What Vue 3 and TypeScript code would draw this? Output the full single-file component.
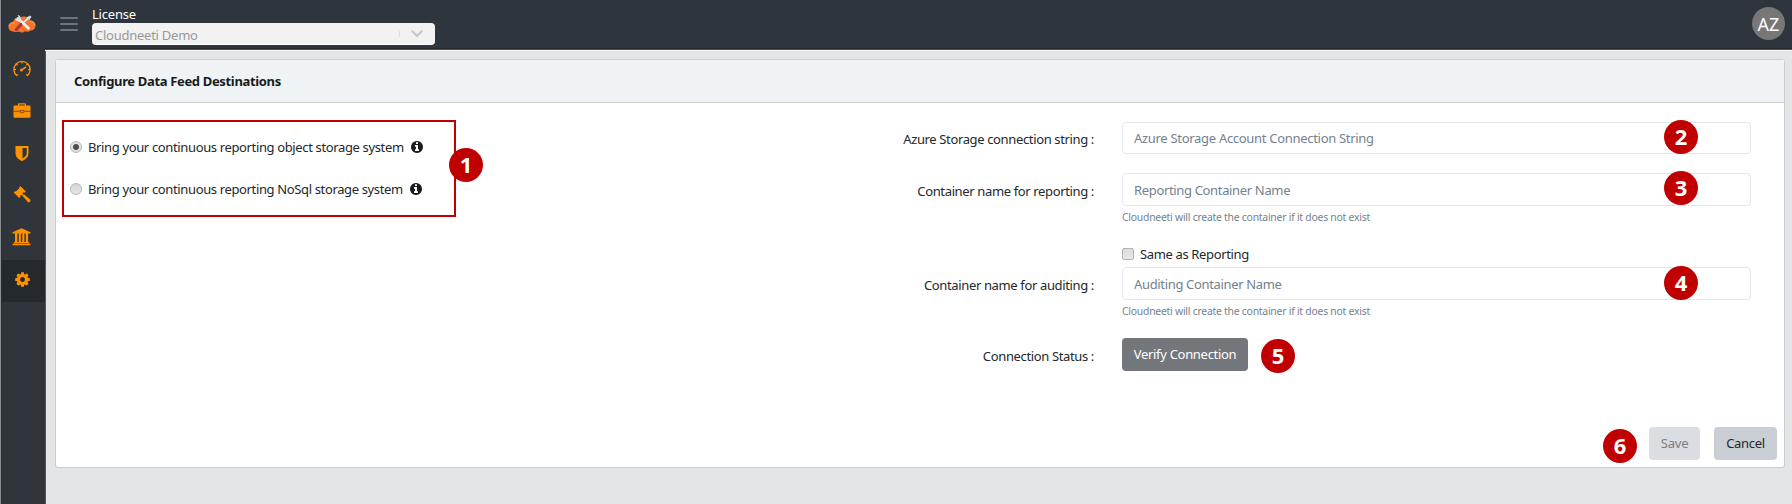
<script setup lang="ts">
import { ref } from 'vue'

type IconName = 'gauge' | 'briefcase' | 'shield' | 'gavel' | 'bank' | 'cog'

const navItems: { icon: IconName; label: string }[] = [
  { icon: 'gauge', label: 'Dashboard' },
  { icon: 'briefcase', label: 'Assets' },
  { icon: 'shield', label: 'Security' },
  { icon: 'gavel', label: 'Policies' },
  { icon: 'bank', label: 'Governance' },
  { icon: 'cog', label: 'Configuration' },
]
const activeIcon: IconName = 'cog'

const storage = ref('object')
const options = [
  { value: 'object', text: 'Bring your continuous reporting object storage system' },
  { value: 'nosql', text: 'Bring your continuous reporting NoSql storage system' },
]
const connection = ref('')
const reporting = ref('')
const auditing = ref('')
</script>

<template>
  <div class="app">
    <aside class="sidebar">
      <div class="logo">
        <svg width="28" height="20" viewBox="0 0 28 20">
          <path d="M5 17.500C2 17.500.5 15.500.5 13.300 0 10.500 2.300 8 5 8c.4-3 3.500-4.500 6-3.500 3-3 9.500-2.500 11 2C26 6.500 28 9.500 27.500 12c-.3 3-2.500 4.500-5 4.500-1.500 1.500-4 1.500-5.500.8-1.500 1.500-4.500 1.800-6 .2-1.500.8-4 .8-6 0z" fill="#f5742a" />
          <path d="M1 12c.8-2.800 3.500-4 6-2.500M22 7c2.500-.2 4.500 2 4.700 4" stroke="#ffa564" stroke-width="1" fill="none" />
          <path d="M10 4.500l10.500 9.700" stroke="#edf0f4" stroke-width="2.900" stroke-linecap="round" />
          <path d="M7 3.200c-.3 2.800 1.700 4.600 4.200 4.100 2-1.300 2.300-4.500-.2-6L9.700 1l1 2.400-1.300 1.400-2.400-.6z" fill="#d8e0e8" />
          <path d="M20.500 3.800l-7.500 7" stroke="#f1f3f5" stroke-width="1.800" />
          <path d="M18.600 3.400l3.400-2 1.500 1.500-2.300 3.200z" fill="#d5dce4" />
          <path d="M12.900 10.400l-4.700 5.300" stroke="#b92f2c" stroke-width="3" stroke-linecap="round" />
        </svg>
      </div>
      <nav>
        <a v-for="item in navItems" :key="item.icon" class="nav-item" :class="{ active: item.icon === activeIcon }" :aria-label="item.label">
          <svg v-if="item.icon === 'gauge'" width="20" height="20" viewBox="0 0 20 20">
            <path d="M5 16.900A8.100 8.100 0 1 1 15 16.900" fill="none" stroke="#ff9100" stroke-width="1.300" />
            <path d="M2 10.500h2M4.300 5l1.300 1.200M10 2.500v2M15.700 5l-1.300 1.200M18 10.500h-2M4.700 16.500l1.200-1.500M15.300 16.500L14.100 15" stroke="#ff9100" stroke-width="1.200" />
            <path d="M9.500 11.200L14 8" stroke="#ff9100" stroke-width="1.600" />
            <circle cx="9.400" cy="11" r="1.500" fill="#ff9100" />
          </svg>
          <svg v-else-if="item.icon === 'briefcase'" width="20" height="20" viewBox="0 0 20 20">
            <path fill="#ff9100" fill-rule="evenodd" d="M6 4.500V3.300Q6 2.300 7 2.300h6q1 0 1 1v1.200h3.500q1 0 1 1v10.300q0 .9-1 .9h-15q-1 0-1-.9V5.500q0-1 1-1zm1.300 0h5.400V3.500H7.300z" />
            <path d="M1.500 10.300h6.300M12.200 10.300h6.300" stroke="#7a4b16" stroke-width="1" />
            <path d="M8 9.600h4v1.700q-2 1.500-4 0z" fill="#ff9100" stroke="#7a4b16" stroke-width=".9" />
          </svg>
          <svg v-else-if="item.icon === 'shield'" width="18" height="20" viewBox="0 0 18 20">
            <path fill="#ff9100" fill-rule="evenodd" d="M2.500 3h13v7.200q0 4.800-6.500 8-6.500-3.200-6.500-8zM9.500 5v10.500q4.200-2.400 4.200-5.400V5z" />
          </svg>
          <svg v-else-if="item.icon === 'gavel'" width="20" height="20" viewBox="0 0 20 20">
            <g fill="#ff9100">
              <path d="M8.700 1.600l4.800 4.800-.9 1-.7-.4-3.600 3.600.4.700-1 .9-5.600-4.900.9-1 .8.300 3.700-3.700-.4-.6z" />
              <path d="M9.600 7.700l2 1.600-1.100 1.500-2-1.500z" />
              <path d="M12 9.300l6.100 5.200q.9 1-.1 2.200-1.200 1.200-2.200.2L10.600 11z" />
              <path d="M2.600 6.700L8.200 12l-.9.900L1.700 7.600zM8.200 1.200l5.700 5.500-.9 1-5.600-5.700z" />
            </g>
          </svg>
          <svg v-else-if="item.icon === 'bank'" width="20" height="20" viewBox="0 0 20 20">
            <g fill="#ff9100">
              <path d="M9.500 1.200l9 4v1.200H.5V5.200z" />
              <path d="M3 6h2.300v9H3zM6.800 6h2.100v9H6.800zM10.300 6h2.100v9h-2.100zM13.800 6h2.300v9h-2.300z" />
              <path d="M1.800 14.900h15.400v1.300H1.800zM.5 16.700h18v1.600H.5z" />
            </g>
          </svg>
          <svg v-else width="17" height="17" viewBox="0 0 1792 1792">
            <path fill="#ff9100" d="M1152 896q0-106-75-181t-181-75-181 75-75 181 75 181 181 75 181-75 75-181zm512-109v222q0 12-8 23t-20 13l-185 28q-19 54-39 91 35 50 107 138 10 12 10 25t-9 23q-27 37-99 108t-94 71q-12 0-26-9l-138-108q-44 23-91 38-16 136-29 186-7 28-36 28h-222q-14 0-24.500-8.500t-11.500-21.500l-28-184q-49-16-90-37l-141 107q-10 9-25 9-14 0-25-11-126-114-165-168-7-10-7-23 0-12 8-23 15-21 51-66.500t54-70.500q-27-50-41-99l-183-27q-13-2-21-12.500t-8-23.500v-222q0-12 8-23t19-13l186-28q14-46 39-92-40-57-107-138-10-12-10-24 0-10 9-23 26-36 98.500-107.500t94.500-71.500q13 0 26 10l138 107q44-23 91-38 16-136 29-186 7-28 36-28h222q14 0 24.500 8.500t11.500 21.500l28 184q49 16 90 37l142-107q9-9 24-9 13 0 25 10 129 119 165 170 7 8 7 22 0 12-8 23-15 21-51 66.500t-54 70.500q26 50 41 98l183 28q13 2 21 12.500t8 23.500z" />
          </svg>
        </a>
      </nav>
    </aside>

    <div class="main">
      <header class="topbar">
        <div class="burger"><i></i><i></i><i></i></div>
        <div class="license">
          <label>License</label>
          <div class="select">
            <span class="select-value">Cloudneeti Demo</span>
            <i class="divider"></i>
            <svg width="12" height="8" viewBox="0 0 12 8"><path d="M1.200 1.300L6 5.900l4.800-4.600" fill="none" stroke="#c8c9ca" stroke-width="2.200" stroke-linecap="round" /></svg>
          </div>
        </div>
        <div class="avatar">AZ</div>
      </header>

      <section class="card">
        <h1 class="card-head">Configure Data Feed Destinations</h1>
        <div class="card-body">
          <div class="choices">
            <label v-for="o in options" :key="o.value" class="choice">
              <input v-model="storage" type="radio" name="storage" :value="o.value" />
              <span class="choice-text">{{ o.text }}</span>
              <svg width="12" height="12" viewBox="128 128 1536 1536"><path fill="#181c20" d="M1152 1376v-160q0-14-9-23t-23-9h-96v-512q0-14-9-23t-23-9h-320q-14 0-23 9t-9 23v160q0 14 9 23t23 9h96v320h-96q-14 0-23 9t-9 23v160q0 14 9 23t23 9h448q14 0 23-9t9-23zm-128-896v-160q0-14-9-23t-23-9h-192q-14 0-23 9t-9 23v160q0 14 9 23t23 9h192q14 0 23-9t9-23zm640 416q0 209-103 385.500t-279.500 279.500-385.500 103-385.500-103-279.500-279.500-103-385.500 103-385.500 279.500-279.500 385.500-103 385.500 103 279.500 279.500 103 385.500z" /></svg>
            </label>
            <b class="badge b1">1</b>
          </div>

          <div class="form">
            <div class="row r1">
              <label class="name">Azure Storage connection string :</label>
              <div class="field">
                <input v-model="connection" class="text wide" placeholder="Azure Storage Account Connection String" />
                <b class="badge b2">2</b>
              </div>
            </div>
            <div class="row r2">
              <label class="name">Container name for reporting :</label>
              <div class="field">
                <input v-model="reporting" class="text" placeholder="Reporting Container Name" />
                <small>Cloudneeti will create the container if it does not exist</small>
                <b class="badge b3">3</b>
              </div>
            </div>
            <label class="same"><input type="checkbox" /><span>Same as Reporting</span></label>
            <div class="row r3">
              <label class="name">Container name for auditing :</label>
              <div class="field">
                <input v-model="auditing" class="text" placeholder="Auditing Container Name" />
                <small>Cloudneeti will create the container if it does not exist</small>
                <b class="badge b4">4</b>
              </div>
            </div>
            <div class="row r4">
              <label class="name">Connection Status :</label>
              <div class="field">
                <button class="btn verify">Verify Connection</button>
                <b class="badge b5">5</b>
              </div>
            </div>
          </div>
        </div>
        <footer class="actions">
          <b class="badge b6">6</b>
          <button class="btn save">Save</button>
          <button class="btn cancel">Cancel</button>
        </footer>
      </section>
    </div>
  </div>
</template>

<style>
body { background: #e4e5e6; overflow: hidden; }
</style>

<style scoped>
* { box-sizing: border-box; }
.app { display: flex; width: 1792px; height: 504px; border-left: 1px solid #8d9194; background: #e4e5e6; color: #23282c; font: 13px/20px "Noto Sans", "Open Sans", sans-serif; letter-spacing: -0.36px; white-space: nowrap; }
.sidebar { width: 45px; height: 504px; background: #2f353a; border-left: 1px solid #262c30; border-right: 1px solid #50565a; flex: none; }
.logo { height: 48px; padding: 14px 0 0 6px; }
.logo svg { display: block; }
.nav-item { display: flex; height: 42px; align-items: center; justify-content: center; padding-right: 3px; }
.nav-item.active { margin-top: 2px; background: #24292d; padding-bottom: 3px; padding-right: 2px; }
.main { flex: 1; min-width: 0; display: flex; flex-direction: column; }
.topbar { height: 51px; margin-left: -1px; background: #2f353c; border-bottom: 1px solid #f6f7f7; box-shadow: inset 0 -1px #4b5156, inset 0 -2px #23282d; display: flex; flex: none; }
.burger { width: 18px; margin: 17px 14px 0 15px; display: flex; flex-direction: column; gap: 4px; }
.burger i { height: 2px; background: #697681; flex: none; border-radius: 1px; }
.license { width: 343px; color: #fff; padding-top: 4px; }
.license label { display: block; height: 19px; letter-spacing: -0.2px; }
.select { height: 22px; border-radius: 4px; background: #f2f2f2; border-bottom: 1px solid #fff; display: flex; align-items: center; padding: 0 12px 0 3px; color: #999; letter-spacing: -0.25px; }
.select-value { flex: 1; padding-top: 3px; }
.divider { width: 1px; height: 6px; background: #dedede; margin-right: 11px; }
.avatar { width: 33px; height: 33px; border-radius: 50%; background: #777; color: #fff; margin: 7px 7px 0 auto; text-align: center; font: 18px/34px "Noto Sans", sans-serif; letter-spacing: 0; }
.card { margin: 8px 7px 0 9px; height: 409px; background: #fff; border: 1px solid #c8ced3; border-radius: 3px; display: flex; flex-direction: column; }
.card-head { height: 43px; margin: 0; padding: 11px 18px; background: #f0f3f5; border-bottom: 1px solid #c8ced3; font-size: 13px; line-height: 20px; font-weight: 700; color: #181b1e; flex: none; letter-spacing: -0.34px; }
.card-body { display: flex; align-items: flex-start; height: 324px; }
.choices { position: relative; width: 394px; height: 97px; margin: 17px 0 0 6px; border: 2px solid #c00000; padding: 4px 0 0 6px; flex: none; }
.choice { display: flex; align-items: center; height: 42px; }
.choice svg { margin-left: 7px; }
input { margin: 0; }
input[type='radio'] { appearance: none; width: 12px; height: 12px; border: 1px solid #b9b9b9; border-radius: 50%; background: linear-gradient(#d5d5d5, #e6e6e6); margin-right: 6px; }
input[type='radio']:checked { background: radial-gradient(circle, #4e4e4e 0 2.500px, #e0e0e0 3.500px); }
.badge { position: absolute; width: 34px; height: 34px; border-radius: 50%; background: #c00000; color: #fff; text-align: center; font: 700 22px/33px "Noto Sans", sans-serif; letter-spacing: 0; }
.b1 { left: 385px; top: 26px; }
.b2, .b3, .b4 { left: 542px; }
.b2 { top: -2px; }
.b3 { top: -2px; }
.b4 { top: -1px; }
.b5 { left: 139px; top: 1px; }
.form { margin-left: 438px; padding-top: 19px; }
.row { display: flex; gap: 28px; }
.name { width: 200px; text-align: right; padding-top: 7px; }
.field { position: relative; width: 629px; }
.r1 { height: 51px; }
.r2 { height: 70px; }
.r2 .name, .r3 .name, .r4 .name { padding-top: 8px; }
.r3 { height: 71px; }
.text { display: block; width: 629px; height: 33px; border: 1px solid #e4e7ea; border-radius: 4px; padding: 0 11px; background: #fff; font: 13px/20px "Noto Sans", sans-serif; letter-spacing: -0.34px; }
.text.wide { height: 32px; letter-spacing: -0.3px; }
.text::placeholder { color: #73818f; opacity: 1; }
small { display: block; font-size: 10.400px; line-height: 16px; color: #73818f; margin-top: 3px; letter-spacing: -0.24px; }
.same { display: flex; align-items: center; margin-left: 228px; height: 24px; padding-bottom: 2px; }
input[type='checkbox'] { appearance: none; width: 12px; height: 12px; border: 1px solid #b4b4b4; border-radius: 2px; background: linear-gradient(#ddd, #e8e8e8); margin-right: 6px; }
.btn { height: 33px; border: 0; border-radius: 4px; padding: 0 0 1px; font: 13px/20px "Noto Sans", sans-serif; letter-spacing: -0.3px; }
.verify { width: 126px; background: #73777b; color: #fff; }
.actions { position: relative; display: flex; justify-content: flex-end; gap: 14px; padding-right: 7px; }
.save { width: 51px; background: #dadde1; color: #7b7e81; letter-spacing: -0.2px; }
.cancel { width: 63px; background: #c8ced3; color: #23282c; }
.b6 { right: 147px; top: 2px; }
</style>
